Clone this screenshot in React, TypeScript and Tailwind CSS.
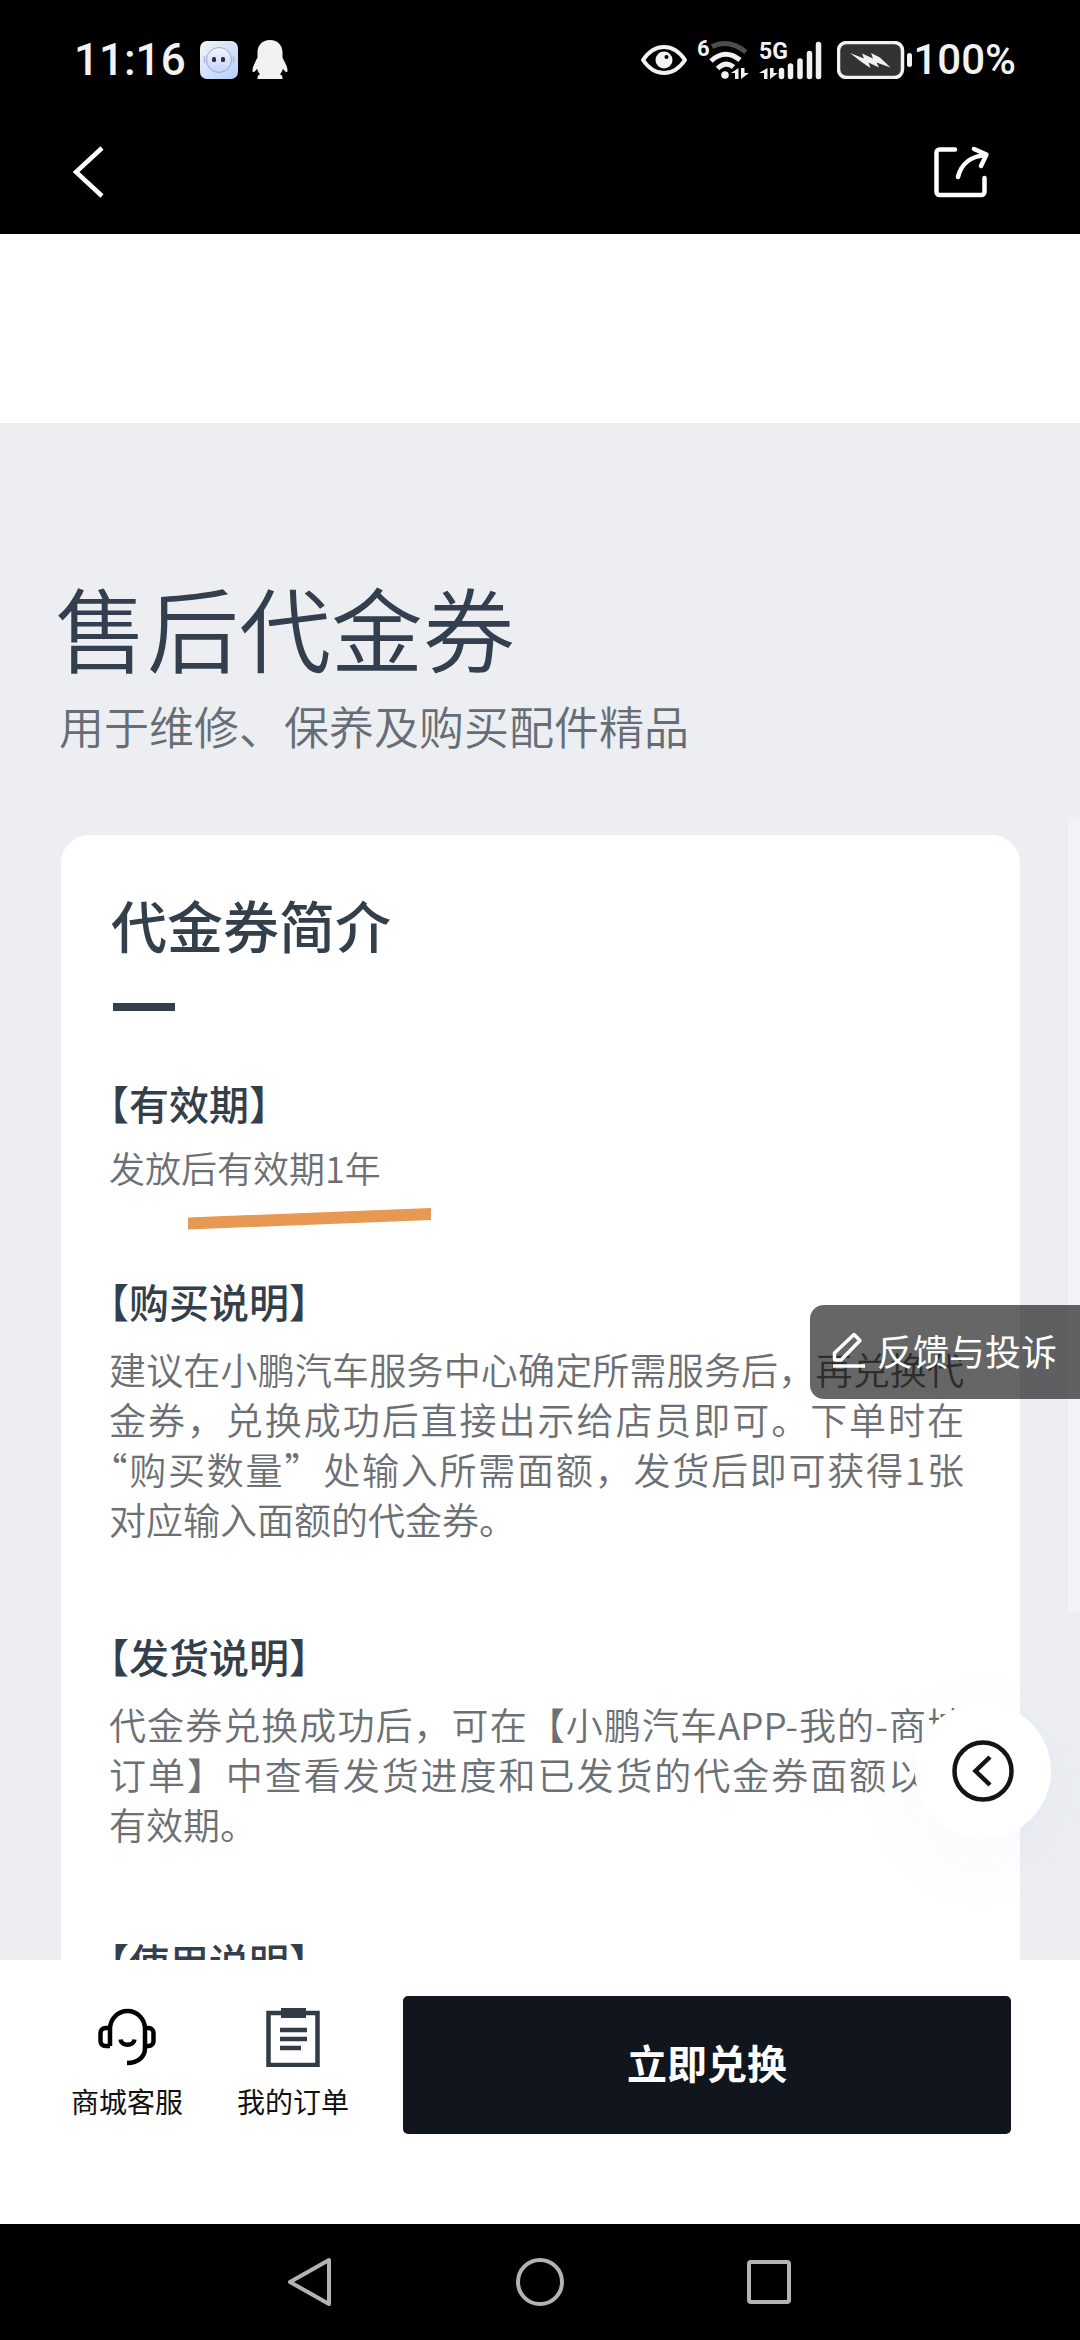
import type { ReactNode } from "react";

function StatusBar() {
  return (
    <div className="flex h-[120px] items-center justify-between pl-[74px] pr-[64px] text-[#f2f2f2]">
      <div className="flex items-center">
        <time className="font-[Roboto,sans-serif] text-[44px] leading-none font-medium">11:16</time>
        <svg className="ml-[14px] size-[38px]" viewBox="0 0 38 38" aria-label="助手">
          <defs>
            <linearGradient id="bot" x1="0" y1="0" x2="1" y2="1">
              <stop offset="0" stopColor="#f6f6ee" />
              <stop offset="0.4" stopColor="#d8e6fb" />
              <stop offset="1" stopColor="#b4d0fb" />
            </linearGradient>
            <linearGradient id="face" x1="0" y1="0" x2="0" y2="1">
              <stop offset="0" stopColor="#f4f4fd" />
              <stop offset="1" stopColor="#c3d3fa" />
            </linearGradient>
          </defs>
          <rect width="38" height="38" rx="7" fill="url(#bot)" />
          <path d="M4.500 15v7M33.500 15v7" stroke="#a9b8e2" strokeWidth="1.500" />
          <circle cx="19" cy="19" r="12.500" fill="url(#face)" stroke="#8c98c4" strokeWidth="0.800" />
          <rect x="12" y="16" width="4" height="5" rx="1.500" fill="#32323c" />
          <rect x="21" y="16" width="4" height="5" rx="1.500" fill="#32323c" />
        </svg>
        <svg className="ml-[14px] h-[40px] w-[36px]" viewBox="0 0 36 40" fill="currentColor" aria-label="QQ">
          <path d="M18 0C10 0 5.500 5.500 5.500 12.500v5C4 21 .500 26 .500 30.500c0 2 1.500 2 3 .200.500-.600 1-1.200 1.500-2 .600 2.200 1.600 4 3 5.600-2 .800-2.600 2-2.500 4.700h25c.100-2.700-.500-3.900-2.500-4.700 1.400-1.600 2.400-3.400 3-5.600.500.800 1 1.400 1.500 2 1.500 1.800 3 1.800 3-.200 0-4.500-3.500-9.500-5-13v-5C30.500 5.500 26 0 18 0z" />
        </svg>
      </div>
      <div className="flex items-center">
        <svg className="h-[30px] w-[46px]" viewBox="0 0 46 30" fill="none" aria-label="护眼模式">
          <path d="M2 15C8 6 15 2 23 2s15 4 21 13c-6 9-13 13-21 13S8 24 2 15z" stroke="currentColor" strokeWidth="4" strokeLinejoin="round" />
          <circle cx="23" cy="15" r="8.500" fill="currentColor" />
          <circle cx="25.500" cy="12" r="2" fill="#000" />
        </svg>
        <svg className="ml-[11px] h-[40px] w-[52px] overflow-visible" viewBox="0 0 52 40" fill="none" aria-label="Wi-Fi">
          <text x="-1" y="16" fill="currentColor" className="font-[Roboto,sans-serif] text-[22px] font-bold">6</text>
          <path d="M14 6.500Q31-1.500 48 12" stroke="#4d4d4d" strokeWidth="5" />
          <path d="M13 21Q27 8 42 20" stroke="currentColor" strokeWidth="5" />
          <path d="M19.500 28.500Q28 20.500 35.500 27" stroke="currentColor" strokeWidth="5" />
          <circle cx="27" cy="35" r="3.800" fill="currentColor" />
          <path d="M40.500 28v11h-3.500v-6h-4zM43 28v11l8-6h-4.500v-5z" fill="currentColor" />
        </svg>
        <svg className="ml-[9px] h-[40px] w-[63px] overflow-visible" viewBox="0 0 63 40" fill="none" aria-label="5G 信号">
          <text x="0" y="19" fill="currentColor" className="font-[Roboto,sans-serif] text-[23px] font-bold">5G</text>
          <path d="M8.500 28v11H5v-6H0zM11 28v11l8-6h-4.500v-5z" fill="currentColor" />
          <path d="M22.500 30.500v6M31.500 26v10.500M41 21v15.500M50.500 13.500v23M59.500 4.500v32" stroke="currentColor" strokeWidth="5.500" strokeLinecap="round" />
        </svg>
        <svg className="ml-[15px] h-[38px] w-[76px]" viewBox="0 0 76 38" fill="none" aria-label="充电中">
          <rect x="1.500" y="1.500" width="64" height="35" rx="8" fill="#333" stroke="currentColor" strokeWidth="3.500" />
          <path d="M13 12l14 5.500-2-5 11 5-2-5.500 9 4.500 10.500 10-14-5 2.500 5-10.500-5 2 5.500-9-6z" fill="currentColor" />
          <rect x="70" y="12" width="5" height="14" rx="2.500" fill="currentColor" />
        </svg>
        <span className="font-[Roboto,sans-serif] text-[42px] leading-none font-medium">100%</span>
      </div>
    </div>
  );
}

function TitleBar() {
  return (
    <div className="flex h-[114px] items-center justify-between px-[71px] pb-[10px] text-white">
      <button type="button" aria-label="返回">
        <svg className="h-[52px] w-[34px]" viewBox="0 0 34 52" fill="none">
          <path d="M31 2L5 26l26 24" stroke="currentColor" strokeWidth="4.500" />
        </svg>
      </button>
      <button type="button" aria-label="分享" className="mr-[19px]">
        <svg className="h-[52px] w-[56px]" viewBox="0 0 56 52" fill="none" stroke="currentColor" strokeWidth="4.500" strokeLinecap="round" strokeLinejoin="round">
          <path d="M21 3.500H5.500a3 3 0 0 0-3 3V46a3 3 0 0 0 3 3h42a3 3 0 0 0 3-3V32" />
          <path d="M24 31C27 18 37 10 52 9M40 3l12.500 5.500L47 20" />
        </svg>
      </button>
    </div>
  );
}

function Section({ title, children }: { title: string; children?: ReactNode }) {
  return (
    <section className="text-[#6c7074]">
      <h3 className="text-[40px] leading-[60px] font-medium text-[#333f4b] [text-spacing-trim:trim-start]">{title}</h3>
      {children}
    </section>
  );
}

function Paragraph({ lines }: { lines: string[] }) {
  return (
    <p className="mt-[13px] mr-[16px] text-[37px] leading-[50px] font-[350] text-justify [text-spacing-trim:trim-start]">
      {lines.map((line, i) => (
        <span
          key={line}
          className={
            i < lines.length - 1
              ? "block whitespace-nowrap [text-align-last:justify]"
              : "block whitespace-nowrap"
          }
        >
          {line}
        </span>
      ))}
    </p>
  );
}

function IntroCard() {
  return (
    <article className="mr-[60px] ml-[61px] mt-[74px] h-[1400px] rounded-[28px] bg-white pl-[48px] pr-[40px] pt-[47px]">
      <h2 className="pl-[2px] text-[56px] leading-[84px] font-medium text-[#333f4b]">代金券简介</h2>
      <div className="mt-[37px] ml-1 h-[8px] w-[62px] bg-[#333f4b]" />
      <div className="mt-[62px]">
        <Section title="【有效期】">
          <div className="relative">
            <p className="mt-[9px] text-[36px] leading-[50px] font-[350]">发放后有效期1年</p>
            <svg className="absolute top-[66px] left-[79px] h-[22px] w-[243px]" viewBox="0 0 243 22">
              <path d="M0 9.500L243 0v12L0 21.500z" fill="#e79852" />
            </svg>
          </div>
        </Section>
      </div>
      <div className="mt-[79px]">
        <Section title="【购买说明】">
          <Paragraph
            lines={[
              "建议在小鹏汽车服务中心确定所需服务后，再兑换代",
              "金券，兑换成功后直接出示给店员即可。下单时在",
              "“购买数量”处输入所需面额，发货后即可获得1张",
              "对应输入面额的代金券。",
            ]}
          />
        </Section>
      </div>
      <div className="mt-[82px]">
        <Section title="【发货说明】">
          <Paragraph
            lines={[
              "代金券兑换成功后，可在【小鹏汽车APP-我的-商城",
              "订单】中查看发货进度和已发货的代金券面额以及",
              "有效期。",
            ]}
          />
        </Section>
      </div>
      <div className="mt-[82px]">
        <Section title="【使用说明】" />
      </div>
    </article>
  );
}

function FloatingControls() {
  return (
    <>
      <button
        type="button"
        className="absolute right-0 bottom-[561px] flex h-[94px] items-center gap-[12px] rounded-l-[14px] bg-black/60 pb-[4px] pl-[22px] pr-[23px] text-[36px] leading-none text-white"
      >
        <svg className="h-[36px] w-[33px]" viewBox="0 0 33 36" fill="none" stroke="currentColor" strokeWidth="3.500">
          <path d="M2.500 28V21L22 2.500l6 6L9 28z" strokeLinejoin="round" />
          <path d="M1 34h32" />
        </svg>
        反馈与投诉
      </button>
      <button
        type="button"
        aria-label="展开侧栏"
        className="absolute right-[29px] bottom-[121px] grid size-[136px] place-items-center rounded-full bg-white shadow-[0_20px_80px_rgba(80,120,200,0.05)]"
      >
        <svg className="size-[62px]" viewBox="0 0 62 62" fill="none" stroke="#111418" strokeWidth="4.500">
          <circle cx="31" cy="31" r="28.500" />
          <path d="M38 17L23.500 31 38 45" />
        </svg>
      </button>
    </>
  );
}

function ActionBar() {
  return (
    <footer className="flex h-[264px] items-start gap-[54px] bg-white pt-[36px] pr-[69px] pl-[71px]">
      <button type="button" className="mt-2 flex flex-col items-center text-[28px] leading-[44px] text-[#111]">
        <svg className="mt-[4px] mb-[12px] h-[59px] w-[58px]" viewBox="0 0 58 59" fill="none" stroke="#000" strokeWidth="4.500">
          <path d="M12 38V21a17.500 18 0 0 1 35 0v19c0 8-6 15-18 15" />
          <path d="M12 38H7.500A5 5 0 0 1 2.500 33V25a5 5 0 0 1 5-5H12M47 20h3.500a5 5 0 0 1 5 5v8a5 5 0 0 1-5 5H47" />
          <path d="M22.500 31.500c1 7 13 7 14 0" />
        </svg>
        商城客服
      </button>
      <button type="button" className="mt-2 flex flex-col items-center text-[28px] leading-[44px] text-[#111]">
        <svg className="mt-[4px] mb-[12px] h-[59px] w-[54px]" viewBox="0 0 54 59" fill="none">
          <rect x="2.500" y="5" width="49" height="52" stroke="#333b47" strokeWidth="4.500" />
          <rect x="15" y="0" width="25" height="10" fill="#333b47" />
          <path d="M14 22h27M14 31h27M14 40h21" stroke="#333b47" strokeWidth="4.500" />
        </svg>
        我的订单
      </button>
      <button type="button" className="h-[138px] flex-1 rounded-[5px] bg-[#11151e] pb-[6px] text-[40px] font-bold text-white">
        立即兑换
      </button>
    </footer>
  );
}

function SystemNav() {
  return (
    <nav className="flex h-[116px] items-center justify-center gap-[180px] bg-black text-[#b3b3b3]">
      <button type="button" aria-label="返回">
        <svg className="size-[50px]" viewBox="0 0 50 50" fill="none" stroke="currentColor" strokeWidth="4" strokeLinejoin="round">
          <path d="M5 25L44 3v44z" />
        </svg>
      </button>
      <button type="button" aria-label="主屏幕">
        <svg className="size-[50px]" viewBox="0 0 50 50" fill="none" stroke="currentColor" strokeWidth="4">
          <circle cx="25" cy="25" r="22" />
        </svg>
      </button>
      <button type="button" aria-label="最近任务">
        <svg className="size-[50px]" viewBox="0 0 50 50" fill="none" stroke="currentColor" strokeWidth="4">
          <rect x="4" y="5" width="40" height="40" rx="2" />
        </svg>
      </button>
    </nav>
  );
}

export default function App() {
  return (
    <div
      lang="zh-CN"
      className="flex h-screen flex-col overflow-hidden bg-white font-['Noto_Sans_CJK_SC',sans-serif]"
    >
      <header className="shrink-0 bg-black">
        <StatusBar />
        <TitleBar />
      </header>
      <main className="relative min-h-0 flex-1 overflow-hidden">
        <div className="h-[189px] bg-white" />
        <div className="relative bg-[#eceef2] pt-[138px]">
          <h1 className="pl-[55px] text-[92px] leading-[130px] font-[350] text-[#333f4f]">售后代金券</h1>
          <p className="pl-[59px] text-[45px] leading-[70px] font-[350] text-[#666d76]">
            用于维修、保养及购买配件精品
          </p>
          <IntroCard />
          <div className="absolute top-[394px] right-0 h-[795px] w-[12px] bg-[#f1f3f8]" />
        </div>
        <FloatingControls />
      </main>
      <ActionBar />
      <SystemNav />
    </div>
  );
}
